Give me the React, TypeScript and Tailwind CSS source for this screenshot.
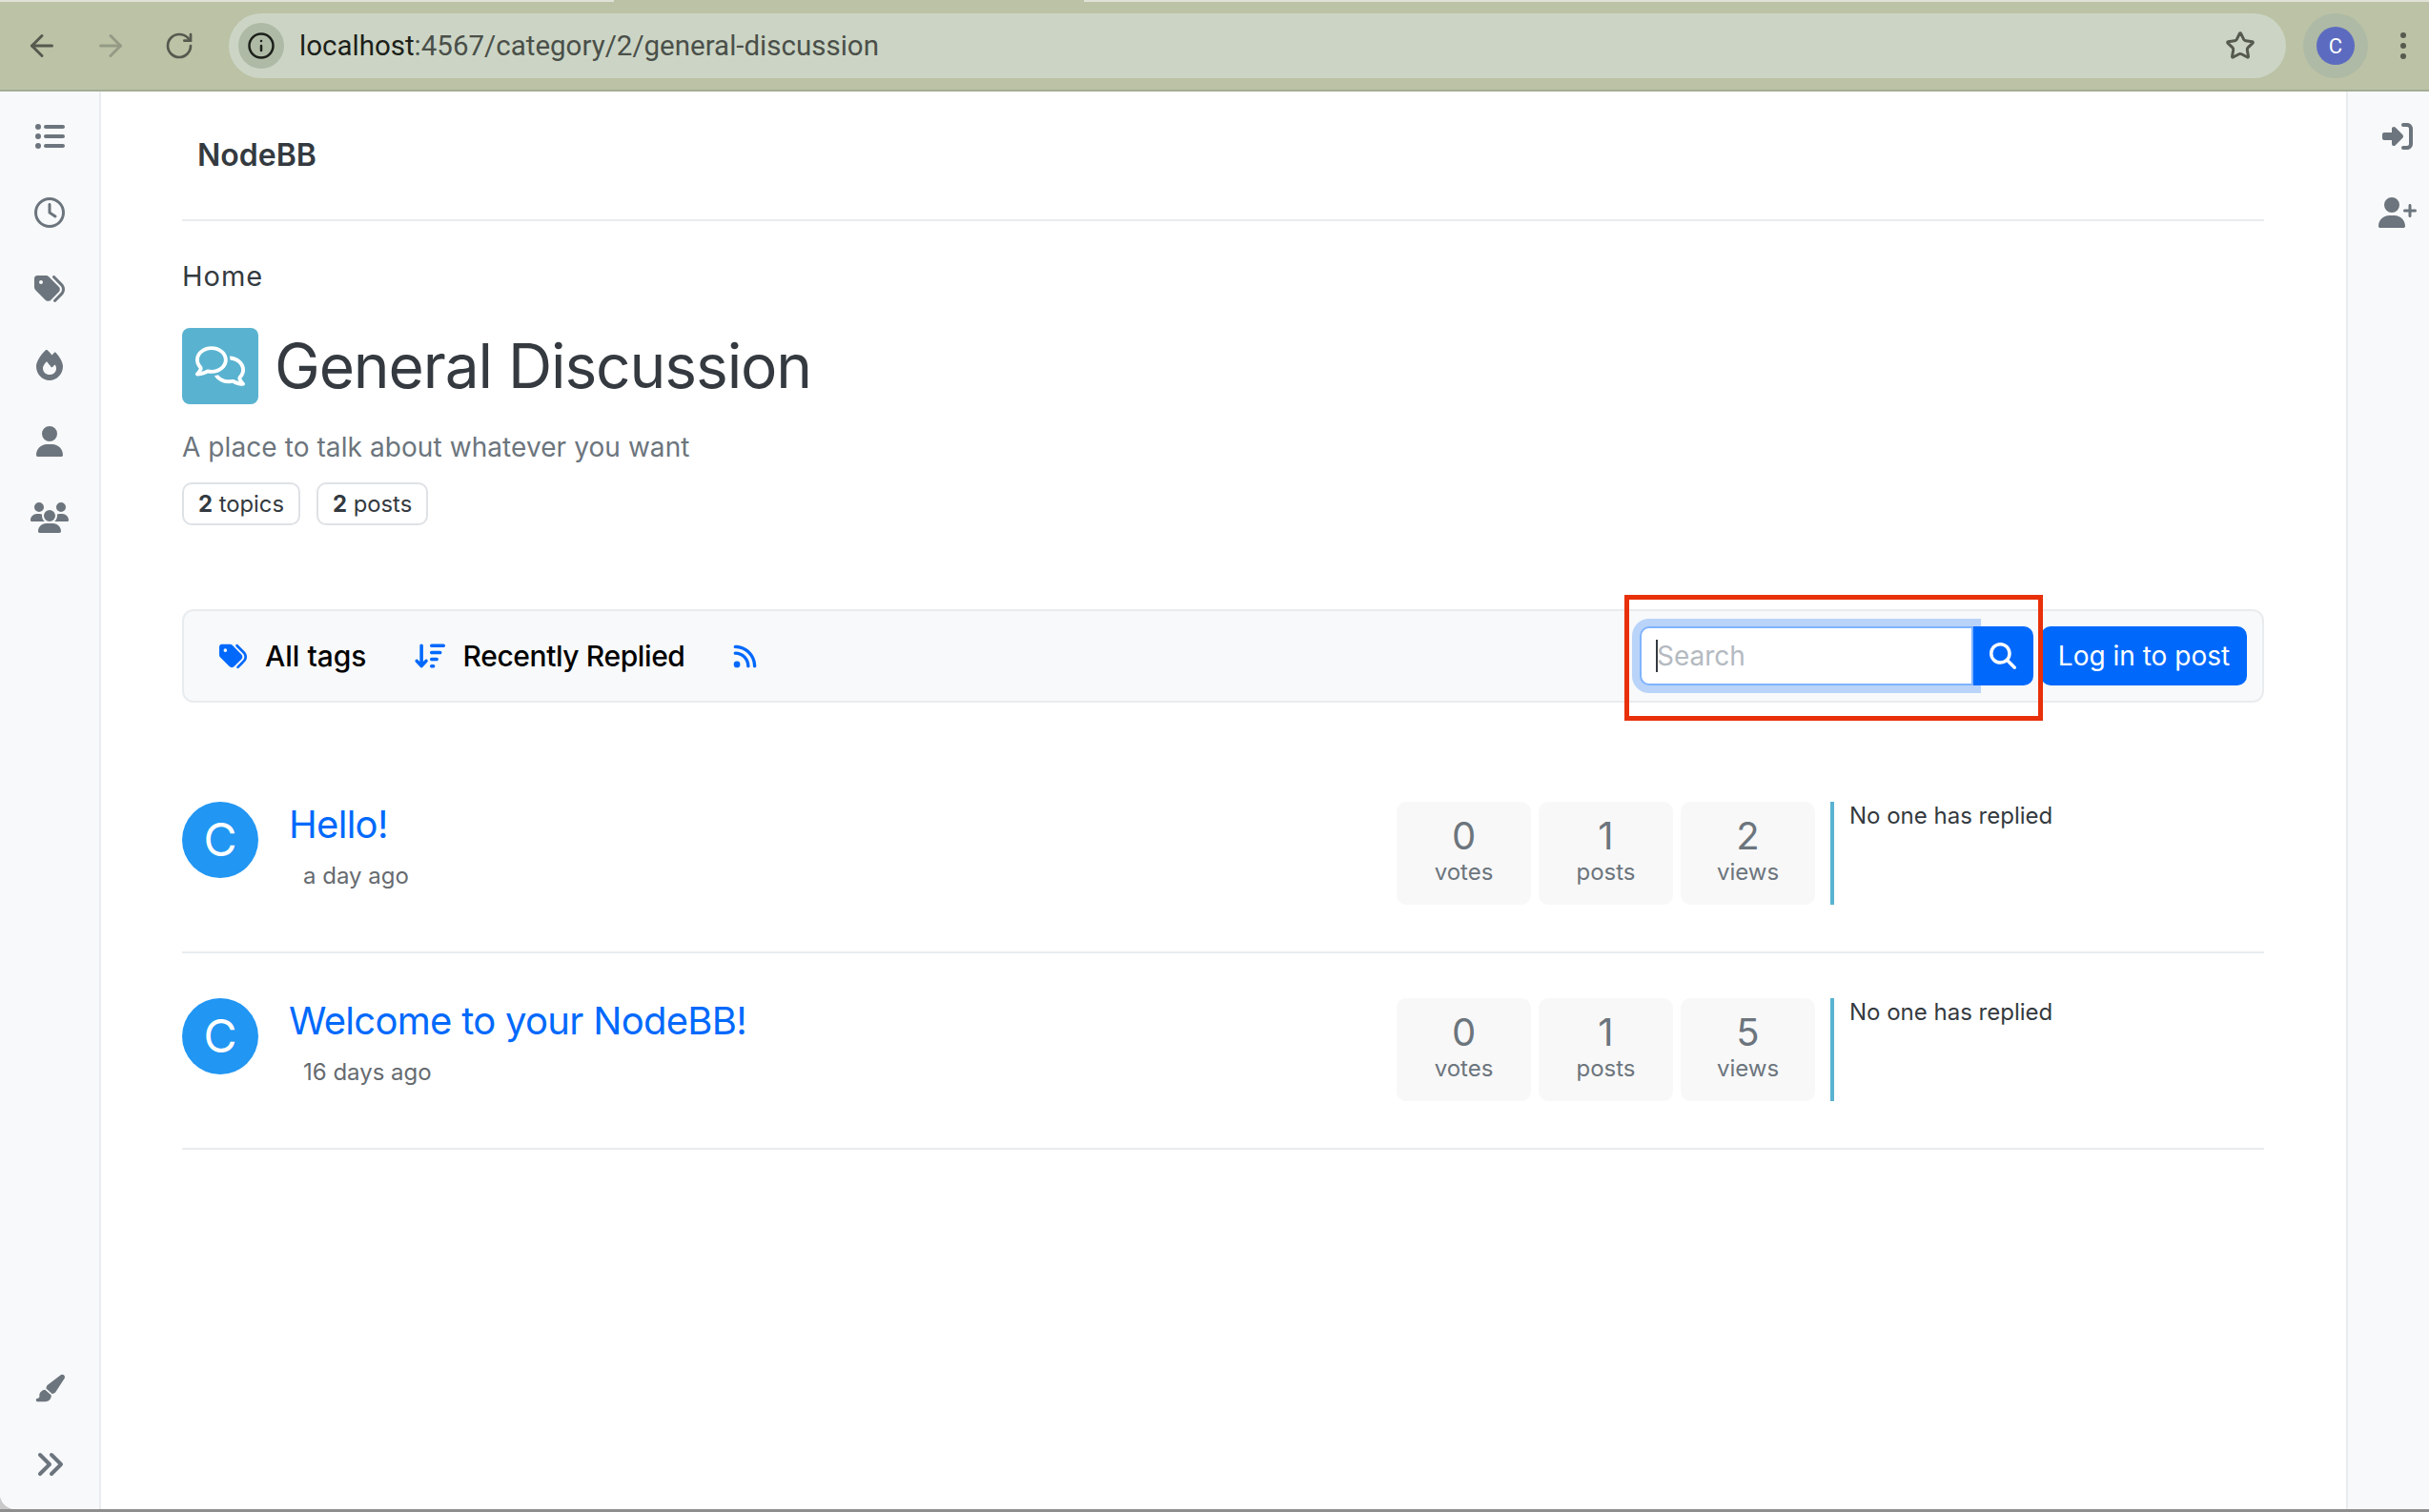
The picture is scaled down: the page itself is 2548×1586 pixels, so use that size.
import { ArrowLeft, ArrowRight, RotateCw, Info, Star } from "lucide-react";
import {
  FaListUl, FaRegClock, FaTags, FaFire, FaUser, FaUsers, FaPaintbrush, FaAnglesRight,
  FaRightToBracket, FaUserPlus, FaRegComments, FaArrowDownWideShort, FaRss, FaMagnifyingGlass,
} from "react-icons/fa6";

const navTop = [
  { icon: FaListUl, size: 32 },
  { icon: FaRegClock, size: 32 },
  { icon: FaTags, size: 32 },
  { icon: FaFire, size: 32 },
  { icon: FaUser, size: 32 },
  { icon: FaUsers, size: 40 },
];

const topics = [
  { title: "Hello!", time: "a day ago", votes: 0, posts: 1, views: 2 },
  { title: "Welcome to your NodeBB!", time: "16 days ago", votes: 0, posts: 1, views: 5 },
];

function Stat({ value, label }: { value: number; label: string }) {
  return (
    <div className="w-[141px] h-[108px] rounded-[10px] bg-[#f8f8f8] flex flex-col items-center pt-[16px] text-[#6c757d]">
      <span className="text-[40px] leading-[40px]">{value}</span>
      <span className="text-[24px] leading-[36px]">{label}</span>
    </div>
  );
}

export default function App() {
  return (
    <div className="relative h-[1586px] w-[2548px] overflow-hidden bg-[#c9c9c9] font-['Inter',sans-serif] text-[#343a40] flex flex-col">
      {/* browser chrome */}
      <div className="h-[96px] shrink-0 bg-[#bbc2a5] border-b-2 border-[#a3ad95] relative flex items-center pt-[2px]">
        <div className="absolute top-0 left-0 right-0 h-[2px] flex justify-between">
          <div className="w-[644px] bg-[#dfe2d5]" />
          <div className="w-[1411px] bg-[#dfe2d5]" />
        </div>
        <div className="flex items-center text-[#55594e] w-[240px] pl-[26px] gap-[36px]">
          <ArrowLeft size={36} strokeWidth={2} />
          <ArrowRight size={36} strokeWidth={2} className="text-[#949b85]" />
          <RotateCw size={32} strokeWidth={2} className="ml-[2px]" />
        </div>
        <div className="w-[2158px] h-[68px] rounded-full bg-[#ccd5c5] flex items-center pl-[10px] pr-[32px]">
          <div className="w-[48px] h-[48px] rounded-full bg-[#aebaa5] flex items-center justify-center text-[#1c1f1a]">
            <Info size={30} strokeWidth={2} />
          </div>
          <span className="ml-[16px] text-[29.5px] text-[#4a4f49] font-['Roboto',sans-serif]">
            <span className="text-[#1c1f1a]">localhost</span>:4567/category/2/general-discussion
          </span>
          <Star size={32} strokeWidth={2.25} className="ml-auto text-[#55594e]" />
        </div>
        <div className="ml-[18px] w-[68px] h-[68px] rounded-full bg-[#aebaa5] flex items-center justify-center">
          <div className="w-[40px] h-[40px] rounded-full bg-[#5c6bc0] text-white text-[22px] flex items-center justify-center font-['Roboto',sans-serif]">C</div>
        </div>
        <div className="ml-[34px] flex flex-col gap-[5px]">
          <div className="w-[6px] h-[6px] rounded-full bg-[#55594e]" />
          <div className="w-[6px] h-[6px] rounded-full bg-[#55594e]" />
          <div className="w-[6px] h-[6px] rounded-full bg-[#55594e]" />
        </div>
      </div>

      <div className="h-[1487px] shrink-0 flex bg-white rounded-bl-2xl overflow-hidden">
        {/* left rail */}
        <div className="w-[106px] shrink-0 bg-[#f8f9fa] border-r-2 border-[#e9ecef] flex flex-col justify-between pt-[7px] pb-[7px] text-[#6c757d]">
          <div>
            {navTop.map((n, i) => (
              <div key={i} className="h-[80px] flex items-center justify-center">
                <n.icon size={n.size} />
              </div>
            ))}
          </div>
          <div>
            <div className="h-[80px] flex items-center justify-center"><FaPaintbrush size={32} /></div>
            <div className="h-[80px] flex items-center justify-center"><FaAnglesRight size={32} /></div>
          </div>
        </div>

        {/* content */}
        <div className="flex-1 pl-[85px] pr-[86px]">
          <div className="h-[136px] border-b-2 border-[#e9ecef] flex items-center pl-[16px]">
            <span className="text-[32px] font-semibold">NodeBB</span>
          </div>

          <div className="mt-[40px] text-[29px] leading-[36px] tracking-[1px]">Home</div>

          <div className="mt-[36px] flex items-center gap-[17px]">
            <div className="w-[80px] h-[80px] rounded-[8px] bg-[#59b3d0] flex items-center justify-center text-white">
              <FaRegComments size={52} />
            </div>
            <h1 className="text-[64px] leading-[80px] tracking-[-1.1px]">General Discussion</h1>
          </div>

          <p className="mt-[25px] text-[28px] leading-[40px] tracking-[0.08px] text-[#6c757d]">A place to talk about whatever you want</p>

          <div className="mt-[17px] flex gap-[17px]">
            <div className="h-[45px] px-[15px] border-2 border-[#dee2e6] rounded-[10px] flex items-center text-[23.8px]">
              <span className="font-bold">2</span>&nbsp;topics
            </div>
            <div className="h-[45px] px-[15px] border-2 border-[#dee2e6] rounded-[10px] flex items-center text-[23.8px]">
              <span className="font-bold">2</span>&nbsp;posts
            </div>
          </div>

          {/* toolbar */}
          <div className="mt-[88px] relative h-[98px] bg-[#f8f9fa] border-2 border-[#e9ecef] rounded-[12px] flex items-center pl-[37px] pr-[16px]">
            <FaTags size={29} className="text-[#0069fc]" />
            <span className="ml-[19px] text-[30px] font-medium text-black">All tags</span>
            <FaArrowDownWideShort size={32} className="ml-[50px] text-[#0069fc]" />
            <span className="ml-[19px] text-[30px] font-medium text-black tracking-[-0.4px]">Recently Replied</span>
            <FaRss size={27} className="ml-[49px] text-[#0069fc]" />

            <div className="ml-auto flex items-center">
              <div className="relative">
                <input
                  placeholder="Search"
                  className="block w-[350px] h-[62px] bg-white border-2 border-[#80b3ff] rounded-l-[10px] pl-[16px] text-[28px] outline-none shadow-[0_0_0_8px_#b9d4f8] placeholder:text-[#b4bac1]"
                />
                <span className="absolute left-[17px] top-[14px] w-[2px] h-[34px] bg-[#343a40]" />
              </div>
              <button className="relative z-10 w-[63px] h-[62px] rounded-r-[10px] bg-[#0069fc] text-white flex items-center justify-center pr-[2px]">
                <FaMagnifyingGlass size={28} />
              </button>
              <button className="ml-[8px] w-[216px] h-[62px] rounded-[10px] bg-[#0069fc] text-white text-[28px] flex items-center justify-center">
                Log in to post
              </button>
            </div>

            {/* annotation from the original screenshot */}
            <div className="absolute top-[-17px] right-[230px] w-[439px] h-[132px] border-[5px] border-[#e8300a] z-20 pointer-events-none" />
          </div>

          {/* topics */}
          <div className="mt-[104px]">
            {topics.map((t, i) => (
              <div key={i} className={`flex items-start border-b-2 border-[#e9ecef] pb-[49px] ${i > 0 ? "pt-[47px]" : ""}`}>
                <div className="w-[80px] h-[80px] rounded-full bg-[#2196f3] text-white text-[48px] flex items-center justify-center shrink-0">C</div>
                <div className="ml-[32px] flex-1">
                  <div className="text-[40px] leading-[48px] tracking-[-0.7px] text-[#0069fc]">{t.title}</div>
                  <div className="mt-[14px] ml-[15px] text-[24px] leading-[32px] text-[#666b70]">{t.time}</div>
                </div>
                <div className="flex gap-[8px]">
                  <Stat value={t.votes} label="votes" />
                  <Stat value={t.posts} label="posts" />
                  <Stat value={t.views} label="views" />
                </div>
                <div className="ml-[16px] w-[455px] h-[108px] border-l-4 border-[#59b3d0] pl-[16px] text-[24px] leading-[30px] whitespace-nowrap">
                  No one has replied
                </div>
              </div>
            ))}
          </div>
        </div>

        {/* right rail */}
        <div className="w-[87px] shrink-0 bg-[#f8f9fa] border-l-2 border-[#e9ecef] pt-[7px] pl-[18px] text-[#6c757d]">
          <div className="h-[80px] flex items-center justify-center"><FaRightToBracket size={32} /></div>
          <div className="h-[80px] flex items-center justify-center"><FaUserPlus size={40} /></div>
        </div>
      </div>

      <div className="h-[3px] shrink-0 bg-[#8e8e8e]" />
    </div>
  );
}
